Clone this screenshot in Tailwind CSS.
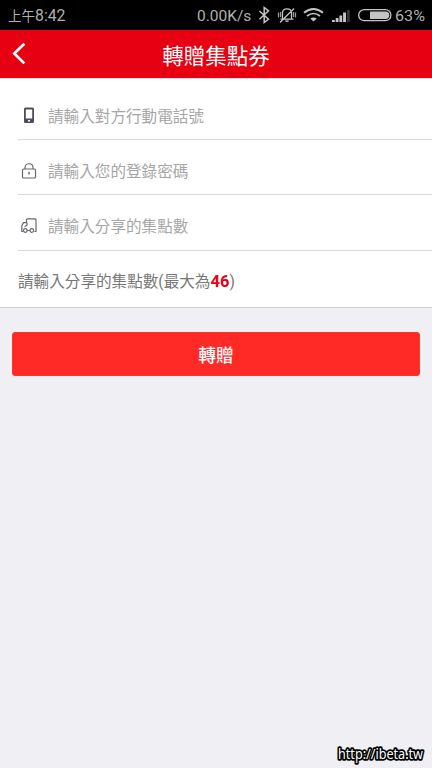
<!DOCTYPE html>
<html lang="zh-Hant">
<head>
<meta charset="utf-8">
<meta name="viewport" content="width=device-width, initial-scale=1">
<title>轉贈集點券</title>
<script src="https://cdn.jsdelivr.net/npm/@tailwindcss/browser@4"></script>
</head>
<body class="bg-[#efeff4]">
<div class="relative flex h-[768px] w-[432px] flex-col overflow-hidden bg-[#efeff4] font-[Roboto,'Noto_Sans_CJK_TC',sans-serif]">
  <div class="flex h-[30px] shrink-0 items-center bg-black pl-2 text-[#b0b0b0]">
    <div class="flex w-[189px] items-baseline pt-[2px] whitespace-nowrap leading-[30px]"><span class="w-[27px] text-[13.5px] font-normal">上午</span><span class="text-[15.8px] font-normal">8:42</span></div>
    <div class="w-[61px] pt-[2px] text-[15.5px] leading-[30px] font-normal whitespace-nowrap">0.00K/s</div>
    <svg class="h-[30px] w-[174px] shrink-0" viewBox="258 0 174 30" fill="none" stroke="#c4c4c4">
      <path d="M259.500 11l9 8.300-4.300 3.200V7.500l4.300 3.300-9 8.400" stroke-width="1.500"/>
      <g stroke-width="1.300"><path d="M282.500 19v-6c0-5.500 9-5.500 9 0v6M280.500 19.200h13M285.500 20.500q1.500 1.800 3 0M280 22.500L294 8.500"/><path d="M278.500 12.500v5M280.600 12v5M293.500 12v5M295.500 12.500v5" stroke="#999"/></g>
      <path d="M304 12.800q9.500-7.600 19 0" stroke-width="1.900"/><path d="M307 16q6.500-5 13 0" stroke-width="1.700"/><path d="M310.300 18.600q3.200-2.300 6.400 0L313.500 21.500z" fill="#c4c4c4" stroke="none"/>
      <g fill="#c4c4c4" stroke="none"><path d="M332 20h2.800v2H332zM335.700 18h2.800v4h-2.800zM339.400 15.500h2.800v6.500h-2.800zM343.100 12.500h2.900v9.500h-2.900z"/><path d="M347 10h2.800v12h-2.800z" fill="#363636"/></g>
      <rect x="358.700" y="9.700" width="32.200" height="11" rx="5.500" stroke-width="1.300"/><path d="M370 11.500h15.600a3.700 3.700 0 010 7.400H370z" fill="#c4c4c4" stroke="none"/>
      <text x="395" y="21" font-size="15" font-weight="400" fill="#b0b0b0" stroke="none" textLength="30" lengthAdjust="spacingAndGlyphs">63%</text>
    </svg>
  </div>
  <header class="grid h-12 shrink-0 grid-cols-[60px_1fr_60px] items-center bg-[#e60012] text-white">
    <svg class="ml-[10px] h-6 w-5" viewBox="0 0 20 24" fill="none" stroke="white" stroke-width="2.700"><path d="M14.300 1.800L4.300 11.500 14.300 21.400"/></svg>
    <h1 class="pt-[6px] text-center text-[21.5px] leading-[42px] font-normal whitespace-nowrap">轉贈集點券</h1>
  </header>
  <main class="h-[230px] shrink-0 border-t border-b border-t-[#e8dfe1] border-b-[#d3d3d6] bg-white pl-[18px] text-[15.6px] text-[#a6a6a6]">
    <div class="flex h-[61px] items-center border-b border-[#d9d9dc] pt-[13px]">
      <svg class="h-[22px] w-[30px]" viewBox="0 0 30 22"><rect x="6" y="2.500" width="10" height="15.500" rx="1.500" fill="#4c4f5b"/><path d="M7.800 4.500h6.400v9H7.800z" fill="white"/><rect x="10" y="15" width="2" height="1.500" fill="white"/></svg>
      <span class="pt-[2px] leading-6">請輸入對方行動電話號</span>
    </div>
    <div class="flex h-[55px] items-center border-b border-[#d9d9dc] pt-[7px]">
      <svg class="h-[22px] w-[30px]" viewBox="0 0 30 22" fill="none" stroke="#666873" stroke-width="1.200"><rect x="4.500" y="9" width="13" height="9" rx="1"/><path d="M7 9V7.500c0-5 8-5 8 0V9"/><path d="M11 12v2.500" stroke-width="1.500"/></svg>
      <span class="pt-[2px] leading-6">請輸入您的登錄密碼</span>
    </div>
    <div class="flex h-[56px] items-center border-b border-[#d9d9dc] pt-[7px]">
      <svg class="h-[22px] w-[30px]" viewBox="0 0 30 22" fill="none" stroke="#666873" stroke-width="1.200"><path d="M5 16.500H3.800V10.700l1.700-3h3V4.900q0-1 1-1h7.500q1 0 1 1v11.600h-1.500M9 7.700v2.500L6.500 11.700"/><circle cx="7.300" cy="15.500" r="1.800"/><circle cx="13.800" cy="15.500" r="1.800"/><path d="M9.200 15.500h2.700"/></svg>
      <span class="pt-[2px] leading-6">請輸入分享的集點數</span>
    </div>
    <p class="pt-[19px] leading-6 whitespace-nowrap text-[#777]">請輸入分享的集點數(最大為<b class="text-[16.5px] font-bold text-[#e60012]">46</b>)</p>
  </main>
  <button class="mx-3 mt-6 h-[44px] shrink-0 rounded-[3px] border border-[#fb3433] bg-[#ff2926] pt-[3px] text-[17.8px] leading-[39px] font-medium text-white">轉贈</button>
  <div class="absolute top-[744px] left-[337px] font-['Noto_Sans'] text-[13.5px] leading-5">
    <svg class="h-5 w-[92px] overflow-visible" viewBox="0 0 92 20"><text x="1" y="15" fill="white" stroke="black" stroke-width="3.500" stroke-linejoin="round" paint-order="stroke" font-weight="400" textLength="85" lengthAdjust="spacingAndGlyphs">http://ibeta.tw</text></svg>
  </div>
</div>
</body>
</html>
